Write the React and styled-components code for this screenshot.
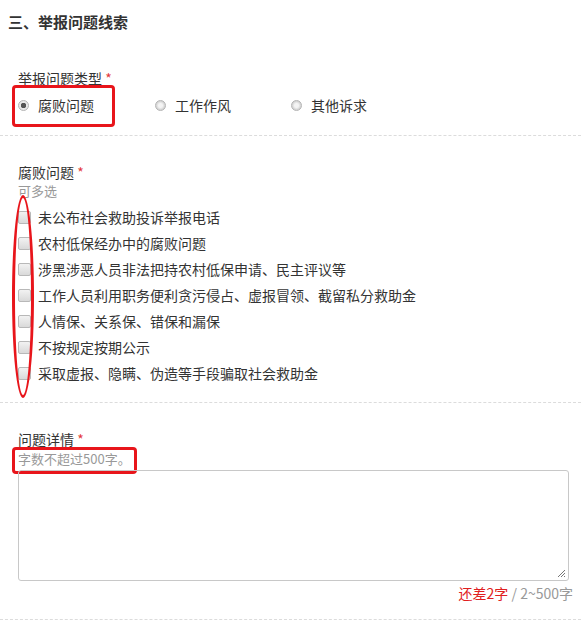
import React from 'react';
import styled, { createGlobalStyle } from 'styled-components';

const GlobalStyle = createGlobalStyle`
  html, body {
    margin: 0;
    padding: 0;
    background: #fff;
  }
  body {
    font-family: "Noto Sans CJK SC", "Microsoft YaHei", sans-serif;
    color: #333;
  }
`;

const Page = styled.div`
  width: 581px;
`;

const Title = styled.h3`
  margin: 0;
  padding: 12px 0 0 8px;
  font-size: 15px;
  line-height: 20px;
  font-weight: bold;
  color: #333;
`;

const Section = styled.div`
  padding: ${({ top }) => top}px 0 ${({ bottom }) => bottom}px 18px;
  border-bottom: 1px dashed #dcdcdc;
`;

const Label = styled.div`
  font-size: 14px;
  line-height: 20px;
  color: #333;

  &::after {
    content: ' *';
    color: #e4393c;
  }
`;

const Hint = styled.div`
  position: relative;
  width: fit-content;
  margin-top: ${({ gap }) => gap || 0}px;
  font-size: 13px;
  line-height: 18px;
  color: #999;
`;

const RadioRow = styled.div`
  display: grid;
  grid-template-columns: 137px 136px auto;
  margin-top: 7px;
`;

const Option = styled.label`
  position: relative;
  display: flex;
  align-items: center;
  height: 20px;
  font-size: 14px;
  color: #333;
  width: fit-content;
`;

const RadioDot = styled.span`
  width: 11px;
  height: 11px;
  margin-right: 9px;
  border-radius: 50%;
  border: 1px solid #b4b4b4;
  background: radial-gradient(circle, ${({ checked }) => (checked ? '#555 0 2.5px, #e8e8e8 3px' : '#f4f4f4 0 2px, #d6d6d6 4px')});
  box-sizing: border-box;
  flex: none;
`;

const CheckList = styled.div`
  position: relative;
  margin-top: 4px;
`;

const CheckRow = styled.label`
  display: flex;
  align-items: center;
  height: 26px;
  font-size: 14px;
  color: #333;
`;

const CheckBox = styled.span`
  width: 13px;
  height: 13px;
  margin-right: 7px;
  border: 1px solid #b8b8b8;
  border-radius: 2px;
  background: linear-gradient(#f2f2f2, #d9d9d9);
  box-sizing: border-box;
  flex: none;
`;

const TextArea = styled.div`
  margin-top: 2px;
  width: 551px;
  height: 111px;
  border: 1px solid #c8c8c8;
  border-radius: 3px;
  box-sizing: border-box;
  position: relative;
`;

const Grip = styled.svg`
  position: absolute;
  right: 2px;
  bottom: 2px;
`;

const Counter = styled.div`
  margin-top: 2px;
  padding-right: 8px;
  text-align: right;
  font-size: 14px;
  line-height: 20px;
  color: #999;

  em {
    font-style: normal;
    color: #e02020;
  }
`;

const Mark = styled.span`
  position: absolute;
  left: -6px;
  top: ${({ t }) => t}px;
  width: ${({ w }) => w}px;
  height: ${({ h }) => h}px;
  border: 3px solid #e8151b;
  border-radius: ${({ round }) => (round ? '50%' : '4px')};
  box-sizing: border-box;
  pointer-events: none;
`;

const checks = [
  '未公布社会救助投诉举报电话',
  '农村低保经办中的腐败问题',
  '涉黑涉恶人员非法把持农村低保申请、民主评议等',
  '工作人员利用职务便利贪污侵占、虚报冒领、截留私分救助金',
  '人情保、关系保、错保和漏保',
  '不按规定按期公示',
  '采取虚报、隐瞒、伪造等手段骗取社会救助金',
];

export default function App() {
  return (
    <Page>
      <GlobalStyle />
      <Title>三、举报问题线索</Title>

      <Section top={36} bottom={20}>
        <Label>举报问题类型</Label>
        <RadioRow>
          <Option>
            <RadioDot checked />
            腐败问题
            <Mark t={-10} w={103} h={42} />
          </Option>
          <Option>
            <RadioDot />
            工作作风
          </Option>
          <Option>
            <RadioDot />
            其他诉求
          </Option>
        </RadioRow>
      </Section>

      <Section top={26} bottom={16}>
        <Label>腐败问题</Label>
        <Hint>可多选</Hint>
        <CheckList>
          {checks.map((c) => (
            <CheckRow key={c}>
              <CheckBox />
              {c}
            </CheckRow>
          ))}
          <Mark round t={-9} w={22} h={203} />
        </CheckList>
      </Section>

      <Section top={26} bottom={16}>
        <Label>问题详情</Label>
        <Hint gap={1}>
          字数不超过500字。
          <Mark t={-3} w={125} h={27} />
        </Hint>
        <TextArea>
          <Grip width="10" height="10" viewBox="0 0 10 10">
            <path d="M9 2 L2 9 M9 5 L5 9 M9 8 L8 9" stroke="#777" strokeWidth="1" />
          </Grip>
        </TextArea>
        <Counter>
          <em>还差2字</em> / 2~500字
        </Counter>
      </Section>
    </Page>
  );
}
